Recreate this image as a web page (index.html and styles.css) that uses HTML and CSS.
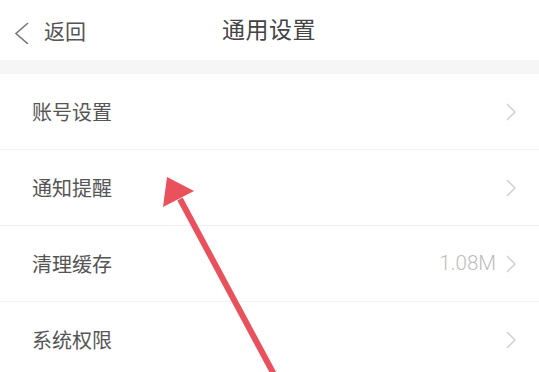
FILE: index.html
```html
<!DOCTYPE html>
<html lang="zh">
<head>
<meta charset="utf-8">
<link rel="stylesheet" href="styles.css">
</head>
<body>
<div class="page">
  <header class="topbar">
    <div class="back">
      <svg class="back-icon" width="16" height="22" viewBox="0 0 16 22"><polyline points="14,1 2,11.5 14,22" fill="none" stroke="#777" stroke-width="1.6"/></svg>
      <span class="back-text">返回</span>
    </div>
    <div class="title">通用设置</div>
  </header>
  <div class="band"></div>
  <ul class="list">
    <li class="row"><span class="label">账号设置</span><span class="right"><svg class="chev" width="10" height="18" viewBox="0 0 10 18"><polyline points="1,1 9,9 1,17" fill="none" stroke="#cfcfcf" stroke-width="1.5"/></svg></span></li>
    <li class="row"><span class="label">通知提醒</span><span class="right"><svg class="chev" width="10" height="18" viewBox="0 0 10 18"><polyline points="1,1 9,9 1,17" fill="none" stroke="#cfcfcf" stroke-width="1.5"/></svg></span></li>
    <li class="row"><span class="label">清理缓存</span><span class="right"><span class="value">1.08M</span><svg class="chev" width="10" height="18" viewBox="0 0 10 18"><polyline points="1,1 9,9 1,17" fill="none" stroke="#cfcfcf" stroke-width="1.5"/></svg></span></li>
    <li class="row"><span class="label">系统权限</span><span class="right"><svg class="chev" width="10" height="18" viewBox="0 0 10 18"><polyline points="1,1 9,9 1,17" fill="none" stroke="#cfcfcf" stroke-width="1.5"/></svg></span></li>
  </ul>
  <svg class="arrow" width="539" height="372" viewBox="0 0 539 372">
    <line x1="180" y1="199" x2="277" y2="380" stroke="#e9515c" stroke-width="6"/>
    <polygon points="167,177 194,191 163,207" fill="#e9515c"/>
  </svg>
</div>
</body>
</html>
```
FILE: styles.css
```css
html, body {
  margin: 0;
  padding: 0;
  background: #fff;
}
.page {
  position: relative;
  width: 539px;
  height: 372px;
  overflow: hidden;
  font-family: "Noto Sans CJK SC", "Noto Sans", sans-serif;
}
.topbar {
  position: relative;
  height: 60px;
  display: flex;
  align-items: center;
  background: #fff;
}
.back {
  display: flex;
  align-items: center;
  padding-left: 14px;
  gap: 14px;
}
.back-icon {
  display: block;
  margin-top: 6px;
}
.back-text {
  font-size: 21px;
  color: #555;
  line-height: 1;
}
.title {
  position: absolute;
  left: 222px;
  top: 17px;
  font-size: 23px;
  color: #444;
  line-height: 1;
  letter-spacing: 0.5px;
}
.band {
  height: 14px;
  background: #f6f6f6;
}
.list {
  list-style: none;
  margin: 0;
  padding: 0;
}
.row {
  height: 75px;
  border-bottom: 1px solid #f1f1f1;
  display: flex;
  align-items: center;
  justify-content: space-between;
  padding: 0 23px 0 32px;
}
.label {
  font-size: 20px;
  color: #555;
  line-height: 1;
}
.right {
  display: flex;
  align-items: center;
  gap: 10px;
}
.value {
  font-family: Roboto, "Noto Sans", sans-serif;
  font-weight: 300;
  font-size: 20.5px;
  color: #bdbdbd;
  line-height: 1;
}
.chev {
  display: block;
}
.arrow {
  position: absolute;
  left: 0;
  top: 0;
  pointer-events: none;
}
```
